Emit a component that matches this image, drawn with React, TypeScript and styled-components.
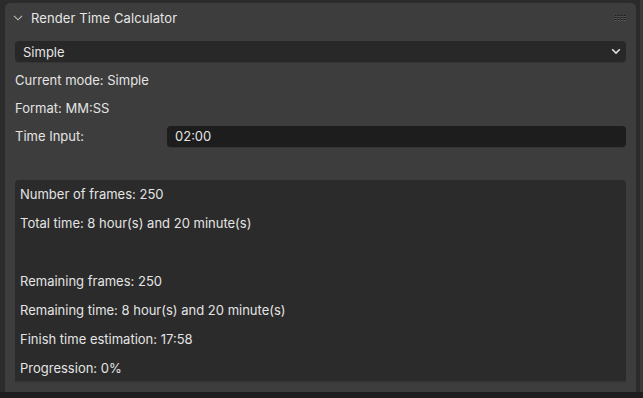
import React from "react";
import styled, { createGlobalStyle } from "styled-components";

const Global = createGlobalStyle`
  html, body { margin: 0; padding: 0; background: #2b2b2b; }
  body { font-family: Inter, "Noto Sans", "DejaVu Sans", sans-serif; font-size: 13px; color: #e4e4e4; }
  * { box-sizing: border-box; }
`;

const Screen = styled.div`
  width: 643px;
  height: 398px;
  display: flex;
  flex-direction: column;
  background: #2b2b2b;
  overflow: hidden;
`;

const Main = styled.div`
  flex: 1;
  display: flex;
  min-height: 0;
`;

const PanelArea = styled.div`
  flex: 1;
  padding: 3px 4px 0 5px;
  display: flex;
`;

const ScrollStrip = styled.div`
  width: 3px;
  background: #3a3a3a;
`;

const BottomBand = styled.div`
  height: 6px;
  background: #1e1e1e;
`;

const Panel = styled.div`
  flex: 1;
  background: #3d3d3d;
  border-radius: 5px 5px 0 0;
  display: flex;
  flex-direction: column;
`;

const Header = styled.div`
  height: 30px;
  display: flex;
  align-items: center;
  padding: 0 10px 0 8px;
  gap: 8px;
`;

const Title = styled.span`
  flex: 1;
  font-size: 13px;
  color: #e6e6e6;
  letter-spacing: 0.1px;
`;

const Body = styled.div`
  display: flex;
  flex-direction: column;
  padding: 8px 10px 8px 10px;
`;

const Dropdown = styled.div`
  height: 21px;
  background: #282828;
  border-radius: 4px;
  display: flex;
  align-items: center;
  padding: 0 5px 0 8px;
  box-shadow: 0 1px 0 #353535;
`;

const DropText = styled.span`
  flex: 1;
`;

const Row = styled.div<{ $first?: boolean }>`
  height: 28px;
  margin-top: ${(p) => (p.$first ? "4px" : "0")};
  display: flex;
  align-items: center;
`;

const Label = styled.span<{ $w?: number }>`
  width: ${(p) => (p.$w ? `${p.$w}px` : "auto")};
  flex: none;
`;

const Input = styled.div`
  flex: 1;
  height: 21px;
  background: #1d1d1d;
  border-radius: 4px;
  display: flex;
  align-items: center;
  padding: 0 8px;
  box-shadow: 0 1px 0 #353535;
`;

const Results = styled.div`
  margin-top: 30px;
  background: #2b2b2b;
  border-radius: 4px 4px 0 0;
  padding: 0 5px;
  display: flex;
  flex-direction: column;
  height: 203px;
  border-bottom: 2px solid #363636;
`;

const ResultLine = styled.div`
  height: 29px;
  flex: none;
  display: flex;
  align-items: center;
  padding-bottom: 1px;
`;

const Chevron = () => (
  <svg width="10" height="6" viewBox="0 0 10 6" fill="none">
    <path d="M1 0.8 L5 4.8 L9 0.8" stroke="#bdbdbd" strokeWidth="1.1" />
  </svg>
);

const DropChevron = () => (
  <svg width="10" height="7" viewBox="0 0 10 7" fill="none">
    <path d="M1.2 1.2 L5 5 L8.8 1.2" stroke="#e0e0e0" strokeWidth="1.6" />
  </svg>
);

const Grip = () => {
  const dots = [];
  for (let c = 0; c < 4; c++) {
    for (let r = 0; r < 3; r++) {
      dots.push(<rect key={`${c}-${r}`} x={c * 3} y={r * 2} width="1.5" height="1.2" fill="#1a1a1a" />);
      dots.push(<rect key={`h${c}-${r}`} x={c * 3 + 0.3} y={r * 2 + 1.2} width="1.2" height="0.6" fill="#8a8a8a" />);
    }
  }
  return (
    <svg width="11" height="6" viewBox="0 0 11 6">
      {dots}
    </svg>
  );
};

export default function App() {
  return (
    <Screen>
      <Global />
      <Main>
        <PanelArea>
          <Panel>
            <Header>
              <Chevron />
              <Title>Render Time Calculator</Title>
              <Grip />
            </Header>
            <Body>
              <Dropdown>
                <DropText>Simple</DropText>
                <DropChevron />
              </Dropdown>
              <Row $first>
                <Label>Current mode: Simple</Label>
              </Row>
              <Row>
                <Label>Format: MM:SS</Label>
              </Row>
              <Row>
                <Label $w={152}>Time Input:</Label>
                <Input>02:00</Input>
              </Row>
              <Results>
                <ResultLine>Number of frames: 250</ResultLine>
                <ResultLine>Total time: 8 hour(s) and 20 minute(s)</ResultLine>
                <ResultLine />
                <ResultLine>Remaining frames: 250</ResultLine>
                <ResultLine>Remaining time: 8 hour(s) and 20 minute(s)</ResultLine>
                <ResultLine>Finish time estimation: 17:58</ResultLine>
                <ResultLine>Progression: 0%</ResultLine>
              </Results>
            </Body>
          </Panel>
        </PanelArea>
        <ScrollStrip />
      </Main>
      <BottomBand />
    </Screen>
  );
}
